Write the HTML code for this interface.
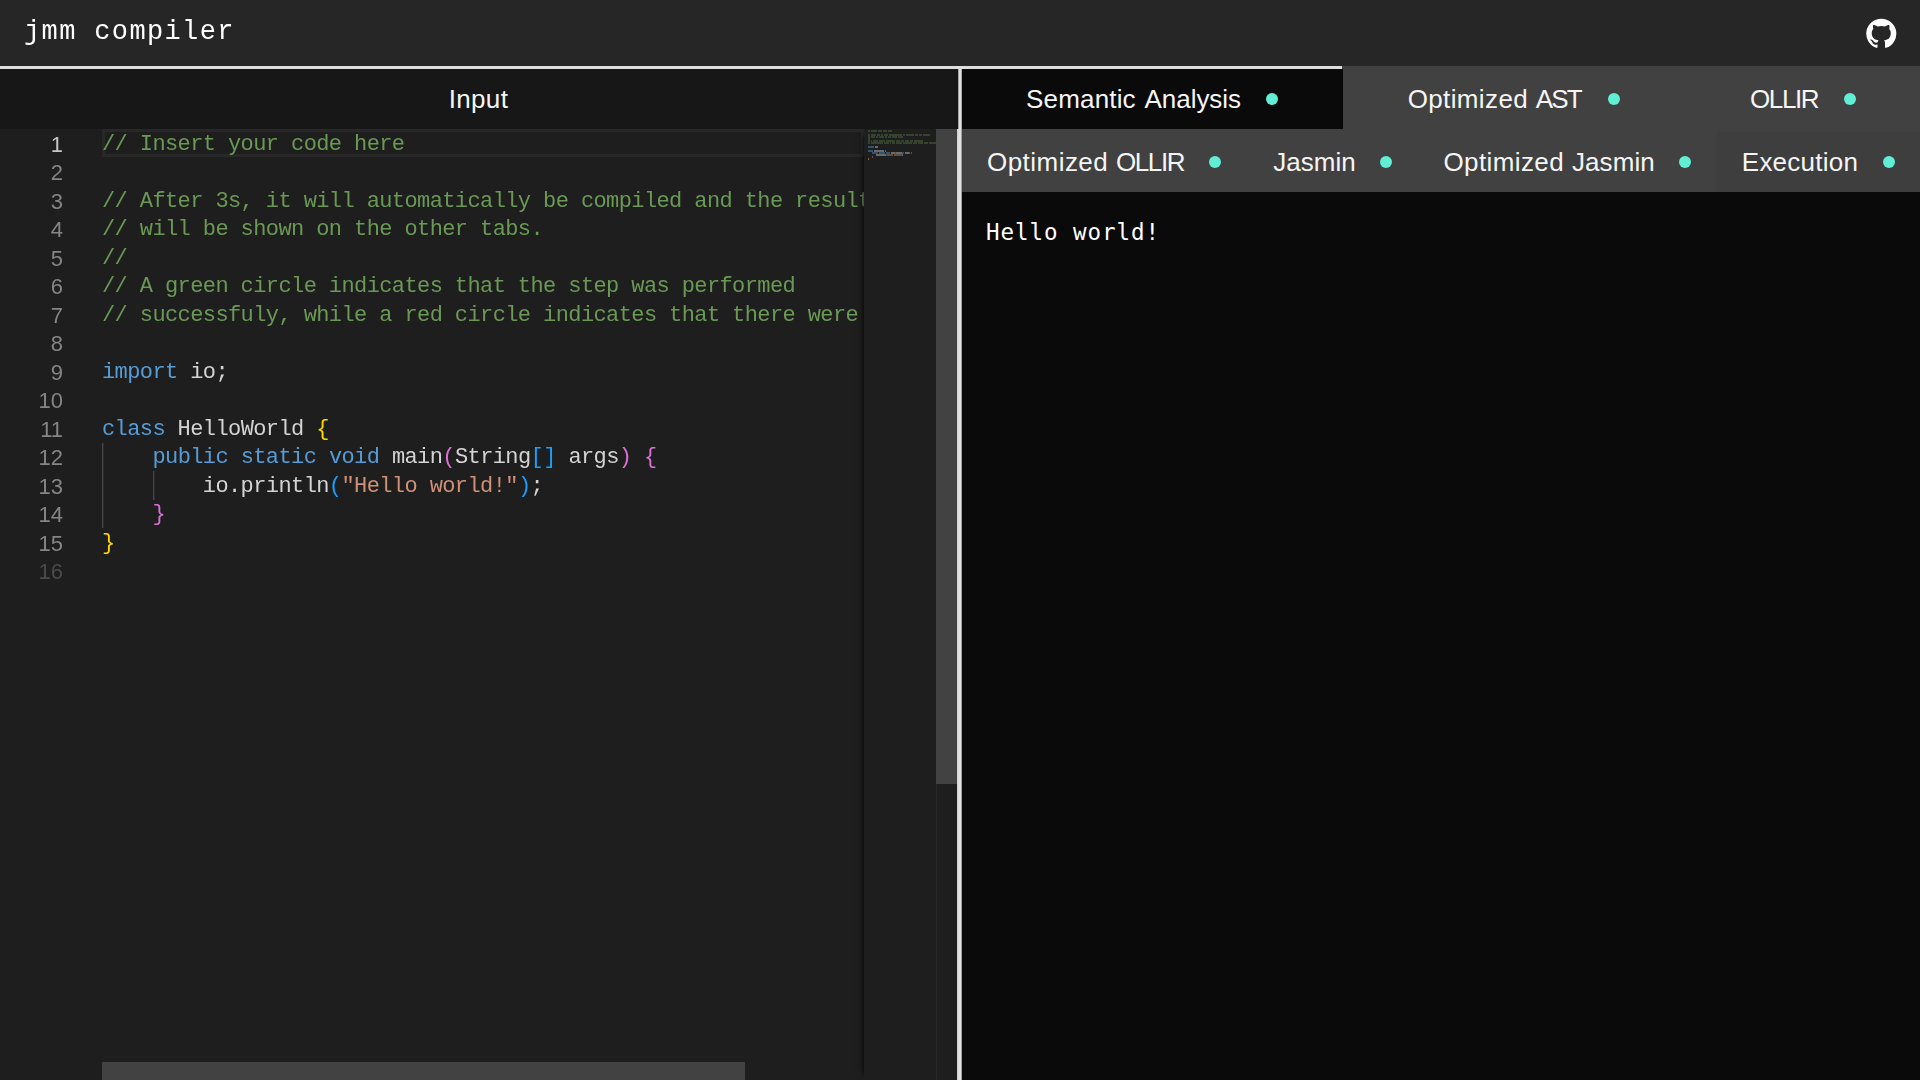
<!DOCTYPE html>
<html lang="en">
<head>
<meta charset="utf-8">
<title>jmm compiler</title>
<style>
  html, body { margin: 0; padding: 0; }
  body {
    width: 1920px; height: 1080px; overflow: hidden; position: relative;
    background: #1e1e1e; color: #fff;
    font-family: "Liberation Sans", sans-serif;
  }

  /* ---------- header ---------- */
  header { position: absolute; left: 0; top: 0; width: 1920px; height: 66px; background: #262626; }
  header h1 { will-change: transform;
    position: absolute; left: 24px; top: 14px; margin: 0;
    font: normal 27px/36px "Liberation Mono", monospace;
    letter-spacing: 1.36px; color: #fff; white-space: pre;
  }
  .gh { position: absolute; left: 1864.7px; top: 16.6px; width: 32.6px; height: 32.6px; fill: #fff; }

  /* ---------- top border + divider ---------- */
  .topline { position: absolute; left: 0; top: 66px; width: 1342px; height: 3px; background: #dedede; }
  .divider-a { position: absolute; left: 958px; top: 69px; width: 4px; height: 60px;
    background: linear-gradient(to right, #a2a2a2 0, #a2a2a2 1px, #e2e2e2 1px, #e2e2e2 3px, #a8a8a8 3px); }
  .divider-b { position: absolute; left: 957px; top: 129px; width: 5px; height: 951px;
    background: linear-gradient(to right, #d2d2d2 0, #d2d2d2 1px, #dedede 1px, #dedede 2px, #e2e2e2 2px, #e2e2e2 4px, #a0a0a0 4px); }

  /* ---------- left pane ---------- */
  .inputbar { position: absolute; left: 0; top: 69px; width: 958px; height: 60px; background: #171717; }
  .lbl { position: absolute; font-size: 26px; line-height: 36px; white-space: pre; color: #f5f5f5; }

  .editor { position: absolute; left: 0; top: 129px; width: 957px; height: 951px; background: #1e1e1e; overflow: hidden; }
  .ln, .code {
    font-family: "Liberation Mono", monospace; font-size: 22px; letter-spacing: -0.6px;
    line-height: 28.5px;
  }
  .ln { position: absolute; left: 0; top: 2px; width: 63px; text-align: right; color: #858585; font-family: "Liberation Sans", sans-serif; letter-spacing: 0; }
  .ln, .code { will-change: transform; }
  .ln div, .code div { height: 28px; white-space: pre; }
  .ln div:nth-child(even), .code div:nth-child(even) { height: 29px; }
  .ln .act { color: #c6c6c6; }
  .ln .dim { color: #4a4a4a; }
  .code { position: absolute; left: 102px; top: 2px; width: 762px; overflow: hidden; color: #d4d4d4; }
  .c { color: #6a9955; } .k { color: #569cd6; } .s { color: #ce9178; }
  .b1 { color: #ffd700; } .b2 { color: #da70d6; } .b3 { color: #179fff; }
  .curline { position: absolute; left: 102px; top: 0; width: 762px; height: 28px; box-sizing: border-box; border: 3px solid #282828; }
  .guide { position: absolute; width: 2px; background: linear-gradient(to right, #464646 0, #464646 1px, #2b2b2b 1px); }
  .minimap { position: absolute; left: 864px; top: 0; width: 72px; height: 951px; background: #1e1e1e; box-shadow: -6px 0 6px -6px #000; }
  .mm { position: absolute; height: 2px; opacity: .42; }
  .vtrack { position: absolute; left: 936px; top: 0; width: 1px; height: 951px; background: #272727; }
  .vslider { position: absolute; left: 936px; top: 0; width: 21px; height: 655px; background: #424242; }
  .hslider { position: absolute; left: 102px; top: 933px; width: 643px; height: 18px; background: #424242; }

  /* ---------- right pane ---------- */
  .tabs { position: absolute; left: 962px; top: 66px; width: 958px; height: 126px; background: #414141; }
  .tab-active { position: absolute; left: 962px; top: 69px; width: 380.5px; height: 60px; background: #0a0a0a; }
  .tab-hover { position: absolute; left: 1716.5px; top: 132px; width: 203.5px; height: 60px; background: #3e3e3e; }
  .dot { position: absolute; width: 12px; height: 12px; border-radius: 50%; background: #60eed4; }
  .output { position: absolute; left: 962px; top: 192px; width: 958px; height: 888px; background: #0a0a0a; }
  .output pre {
    position: absolute; left: 24px; top: 25px; margin: 0;
    font: 22.5px/30px "DejaVu Sans Mono", "Liberation Mono", monospace; letter-spacing: 0.95px; color: #fff;
  }
</style>
</head>
<body>

<header>
  <h1>jmm compiler</h1>
  <svg class="gh" viewBox="0 0 24 24" aria-label="GitHub"><path d="M12 1.27a11 11 0 00-3.48 21.46c.55.09.73-.28.73-.55v-1.84c-3.03.64-3.67-1.46-3.67-1.46-.55-1.29-1.28-1.65-1.28-1.65-.92-.65.1-.65.1-.65 1.1 0 1.73 1.1 1.73 1.1.92 1.65 2.57 1.2 3.21.92a2 2 0 01.64-1.47c-2.47-.27-5.04-1.19-5.04-5.5 0-1.1.46-2.1 1.2-2.84a3.76 3.76 0 010-2.93s.91-.28 3.11 1.1c1.8-.49 3.7-.49 5.5 0 2.1-1.38 3.02-1.1 3.02-1.1a3.76 3.76 0 010 2.93c.83.74 1.2 1.74 1.2 2.94 0 4.21-2.57 5.13-5.04 5.4.45.37.82.92.82 2.02v3.03c0 .27.1.64.73.55A11 11 0 0012 1.27"/></svg>
</header>

<div class="tabs"></div>
<div class="topline"></div>

<!-- left pane -->
<div class="inputbar"></div>


<div class="editor">
  <div class="curline"></div>
  <div class="guide" style="left:102px; top:313.5px; height:85.5px;"></div>
  <div class="guide" style="left:153px; top:342px; height:28.5px;"></div>
  <div class="ln">
<div class="act">1</div><div>2</div><div>3</div><div>4</div><div>5</div><div>6</div><div>7</div><div>8</div><div>9</div><div>10</div><div>11</div><div>12</div><div>13</div><div>14</div><div>15</div><div class="dim">16</div>
  </div>
  <div class="code">
<div><span class="c">// Insert your code here</span></div>
<div></div>
<div><span class="c">// After 3s, it will automatically be compiled and the results</span></div>
<div><span class="c">// will be shown on the other tabs.</span></div>
<div><span class="c">//</span></div>
<div><span class="c">// A green circle indicates that the step was performed</span></div>
<div><span class="c">// successfuly, while a red circle indicates that there were errors.</span></div>
<div></div>
<div><span class="k">import</span> io;</div>
<div></div>
<div><span class="k">class</span> HelloWorld <span class="b1">{</span></div>
<div>    <span class="k">public</span> <span class="k">static</span> <span class="k">void</span> main<span class="b2">(</span>String<span class="b3">[]</span> args<span class="b2">)</span> <span class="b2">{</span></div>
<div>        io.println<span class="b3">(</span><span class="s">"Hello world!"</span><span class="b3">)</span>;</div>
<div>    <span class="b2">}</span></div>
<div><span class="b1">}</span></div>
<div></div>
  </div>
  <div class="minimap" id="minimap"><i class="mm" style="left:4px;top:0.5px;width:2px;background:#6a9955;opacity:.3"></i><i class="mm" style="left:7px;top:0.5px;width:6px;background:#6a9955;opacity:.3"></i><i class="mm" style="left:14px;top:0.5px;width:4px;background:#6a9955;opacity:.3"></i><i class="mm" style="left:19px;top:0.5px;width:4px;background:#6a9955;opacity:.3"></i><i class="mm" style="left:24px;top:0.5px;width:4px;background:#6a9955;opacity:.3"></i><i class="mm" style="left:4px;top:4.5px;width:2px;background:#6a9955;opacity:.3"></i><i class="mm" style="left:7px;top:4.5px;width:5px;background:#6a9955;opacity:.3"></i><i class="mm" style="left:13px;top:4.5px;width:3px;background:#6a9955;opacity:.3"></i><i class="mm" style="left:17px;top:4.5px;width:2px;background:#6a9955;opacity:.3"></i><i class="mm" style="left:20px;top:4.5px;width:4px;background:#6a9955;opacity:.3"></i><i class="mm" style="left:25px;top:4.5px;width:13px;background:#6a9955;opacity:.3"></i><i class="mm" style="left:39px;top:4.5px;width:2px;background:#6a9955;opacity:.3"></i><i class="mm" style="left:42px;top:4.5px;width:8px;background:#6a9955;opacity:.3"></i><i class="mm" style="left:51px;top:4.5px;width:3px;background:#6a9955;opacity:.3"></i><i class="mm" style="left:55px;top:4.5px;width:3px;background:#6a9955;opacity:.3"></i><i class="mm" style="left:59px;top:4.5px;width:7px;background:#6a9955;opacity:.3"></i><i class="mm" style="left:4px;top:6.5px;width:2px;background:#6a9955;opacity:.3"></i><i class="mm" style="left:7px;top:6.5px;width:4px;background:#6a9955;opacity:.3"></i><i class="mm" style="left:12px;top:6.5px;width:2px;background:#6a9955;opacity:.3"></i><i class="mm" style="left:15px;top:6.5px;width:5px;background:#6a9955;opacity:.3"></i><i class="mm" style="left:21px;top:6.5px;width:2px;background:#6a9955;opacity:.3"></i><i class="mm" style="left:24px;top:6.5px;width:3px;background:#6a9955;opacity:.3"></i><i class="mm" style="left:28px;top:6.5px;width:5px;background:#6a9955;opacity:.3"></i><i class="mm" style="left:34px;top:6.5px;width:5px;background:#6a9955;opacity:.3"></i><i class="mm" style="left:4px;top:8.5px;width:2px;background:#6a9955;opacity:.3"></i><i class="mm" style="left:4px;top:10.5px;width:2px;background:#6a9955;opacity:.3"></i><i class="mm" style="left:7px;top:10.5px;width:1px;background:#6a9955;opacity:.3"></i><i class="mm" style="left:9px;top:10.5px;width:5px;background:#6a9955;opacity:.3"></i><i class="mm" style="left:15px;top:10.5px;width:6px;background:#6a9955;opacity:.3"></i><i class="mm" style="left:22px;top:10.5px;width:9px;background:#6a9955;opacity:.3"></i><i class="mm" style="left:32px;top:10.5px;width:4px;background:#6a9955;opacity:.3"></i><i class="mm" style="left:37px;top:10.5px;width:3px;background:#6a9955;opacity:.3"></i><i class="mm" style="left:41px;top:10.5px;width:4px;background:#6a9955;opacity:.3"></i><i class="mm" style="left:46px;top:10.5px;width:3px;background:#6a9955;opacity:.3"></i><i class="mm" style="left:50px;top:10.5px;width:9px;background:#6a9955;opacity:.3"></i><i class="mm" style="left:4px;top:12.5px;width:2px;background:#6a9955;opacity:.3"></i><i class="mm" style="left:7px;top:12.5px;width:12px;background:#6a9955;opacity:.3"></i><i class="mm" style="left:20px;top:12.5px;width:5px;background:#6a9955;opacity:.3"></i><i class="mm" style="left:26px;top:12.5px;width:1px;background:#6a9955;opacity:.3"></i><i class="mm" style="left:28px;top:12.5px;width:3px;background:#6a9955;opacity:.3"></i><i class="mm" style="left:32px;top:12.5px;width:6px;background:#6a9955;opacity:.3"></i><i class="mm" style="left:39px;top:12.5px;width:9px;background:#6a9955;opacity:.3"></i><i class="mm" style="left:49px;top:12.5px;width:4px;background:#6a9955;opacity:.3"></i><i class="mm" style="left:54px;top:12.5px;width:5px;background:#6a9955;opacity:.3"></i><i class="mm" style="left:60px;top:12.5px;width:4px;background:#6a9955;opacity:.3"></i><i class="mm" style="left:65px;top:12.5px;width:7px;background:#6a9955;opacity:.3"></i><i class="mm" style="left:4px;top:16.5px;width:6px;background:#569cd6"></i><i class="mm" style="left:11px;top:16.5px;width:3px;background:#d4d4d4"></i><i class="mm" style="left:4px;top:20.5px;width:5px;background:#569cd6"></i><i class="mm" style="left:10px;top:20.5px;width:10px;background:#d4d4d4"></i><i class="mm" style="left:21px;top:20.5px;width:1px;background:#ffd700"></i><i class="mm" style="left:8px;top:22.5px;width:6px;background:#569cd6"></i><i class="mm" style="left:15px;top:22.5px;width:6px;background:#569cd6"></i><i class="mm" style="left:22px;top:22.5px;width:4px;background:#569cd6"></i><i class="mm" style="left:27px;top:22.5px;width:4px;background:#d4d4d4"></i><i class="mm" style="left:31px;top:22.5px;width:1px;background:#da70d6"></i><i class="mm" style="left:32px;top:22.5px;width:6px;background:#d4d4d4"></i><i class="mm" style="left:38px;top:22.5px;width:2px;background:#179fff"></i><i class="mm" style="left:41px;top:22.5px;width:4px;background:#d4d4d4"></i><i class="mm" style="left:45px;top:22.5px;width:1px;background:#da70d6"></i><i class="mm" style="left:47px;top:22.5px;width:1px;background:#da70d6"></i><i class="mm" style="left:12px;top:24.5px;width:10px;background:#d4d4d4"></i><i class="mm" style="left:22px;top:24.5px;width:1px;background:#179fff"></i><i class="mm" style="left:23px;top:24.5px;width:6px;background:#ce9178"></i><i class="mm" style="left:30px;top:24.5px;width:7px;background:#ce9178"></i><i class="mm" style="left:37px;top:24.5px;width:1px;background:#179fff"></i><i class="mm" style="left:38px;top:24.5px;width:1px;background:#d4d4d4"></i><i class="mm" style="left:8px;top:26.5px;width:1px;background:#da70d6"></i><i class="mm" style="left:4px;top:28.5px;width:1px;background:#ffd700"></i></div>
  <div class="vtrack"></div>
  <div class="vslider"></div>
  <div class="hslider"></div>
</div>

<div class="divider-a"></div>
<div class="divider-b"></div>

<!-- right pane -->
<div class="tab-active"></div>
<div class="tab-hover"></div>

<i class="dot" style="left:1266px; top:93px;"></i>
<i class="dot" style="left:1608px; top:93px;"></i>
<i class="dot" style="left:1843.5px; top:93px;"></i>

<i class="dot" style="left:1209px; top:156px;"></i>
<i class="dot" style="left:1380px; top:156px;"></i>
<i class="dot" style="left:1678.5px; top:156px;"></i>
<i class="dot" style="left:1882.5px; top:156px;"></i>

<!--LBL-->
<span class="lbl" style="left:448.73px; top:81px;"><span style="letter-spacing:0.330px">Input</span></span>
<span class="lbl" style="left:1026.06px; top:81px;"><span style="letter-spacing:0.167px">Semantic</span> <span style="letter-spacing:-0.053px; margin-left:1.58px">Analysis</span></span>
<span class="lbl" style="left:1407.70px; top:81px;"><span style="letter-spacing:0.369px">Optimized</span> <span style="letter-spacing:-1.843px; margin-left:0.55px">AST</span></span>
<span class="lbl" style="left:1750.03px; top:81px;"><span style="letter-spacing:-1.382px">OLLIR</span></span>
<span class="lbl" style="left:986.98px; top:144px;"><span style="letter-spacing:0.469px">Optimized</span> <span style="letter-spacing:-1.360px; margin-left:0.45px">OLLIR</span></span>
<span class="lbl" style="left:1273.25px; top:144px;"><span style="letter-spacing:0.024px">Jasmin</span></span>
<span class="lbl" style="left:1443.48px; top:144px;"><span style="letter-spacing:0.390px">Optimized</span> <span style="letter-spacing:0.097px; margin-left:0.66px">Jasmin</span></span>
<span class="lbl" style="left:1741.81px; top:144px;"><span style="letter-spacing:0.238px">Execution</span></span>
<!--/LBL-->

<div class="output"><pre>Hello world!</pre></div>

</body>
</html>
